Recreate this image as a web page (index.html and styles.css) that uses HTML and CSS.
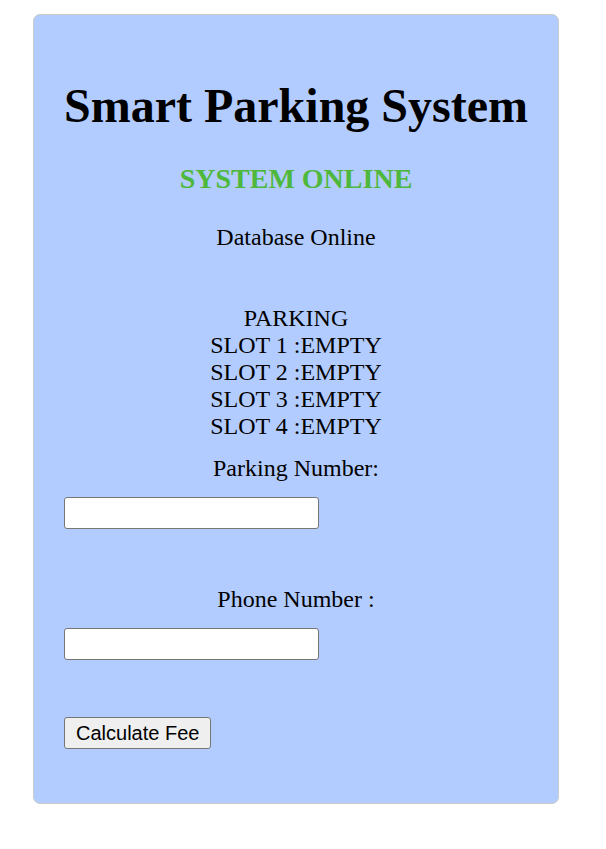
FILE: index.html
```html
<!DOCTYPE html>
<html lang="en">
<head>
<meta charset="utf-8">
<title>Smart Parking System</title>
<link rel="stylesheet" href="styles.css">
</head>
<body>
<main class="card">
  <h1 class="title">Smart Parking System</h1>
  <h2 class="status">SYSTEM ONLINE</h2>
  <p class="database">Database Online</p>
  <div class="slots">
    <div>PARKING</div>
    <div>SLOT 1 :EMPTY</div>
    <div>SLOT 2 :EMPTY</div>
    <div>SLOT 3 :EMPTY</div>
    <div>SLOT 4 :EMPTY</div>
  </div>
  <form class="form">
    <label class="label" for="parking">Parking Number:</label>
    <input class="field" type="text" id="parking">
    <label class="label" for="phone">Phone Number :</label>
    <input class="field" type="text" id="phone">
    <button class="button" type="button">Calculate Fee</button>
  </form>
</main>
</body>
</html>
```

FILE: styles.css
```css
* {
  box-sizing: border-box;
}

body {
  margin: 0;
  padding: 14px 47px 44px 33px;
  background: #fff;
  color: #000;
  font-family: "Liberation Serif", serif;
  font-size: 24px;
  line-height: 27px;
}

.card {
  padding: 64px 30px 54px;
  background: #b3ccff;
  border: 1px solid #ccc;
  border-radius: 7px;
  text-align: center;
}

.title {
  margin: 0;
  font-size: 48px;
  line-height: 54px;
  white-space: nowrap;
}

.status {
  margin: 30px 0 29px;
  color: #4eb83c;
  font-size: 28px;
  line-height: 32px;
}

.database {
  margin: 0 0 54px;
}

.form {
  display: flex;
  flex-direction: column;
  align-items: flex-start;
  margin-top: 15px;
}

.label {
  align-self: stretch;
  margin-bottom: 15px;
}

.field {
  width: 255px;
  max-width: 100%;
  height: 32px;
  margin: 0 0 57px;
  padding: 2px 4px;
  background: #fff;
  border: 1px solid #767676;
  border-radius: 3px;
  font: 20px "Liberation Sans", sans-serif;
}

.button {
  height: 32px;
  padding: 0 11px;
  background: #efefef;
  border: 1px solid #767676;
  border-radius: 3px;
  color: #000;
  font: 20px "Liberation Sans", sans-serif;
}
```
